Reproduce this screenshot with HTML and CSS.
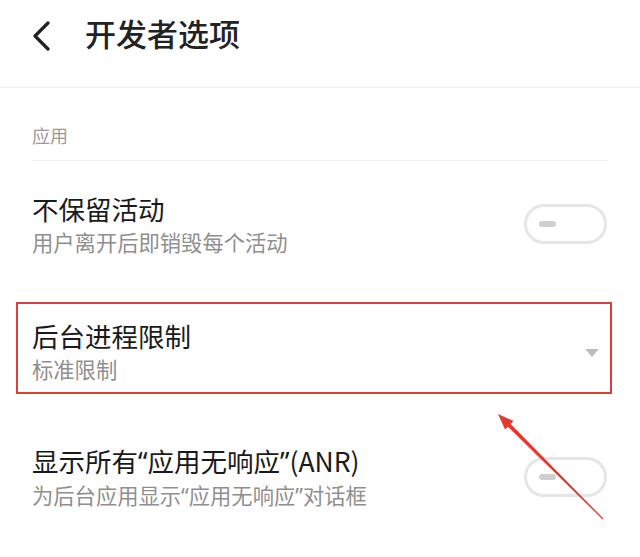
FILE: index.html
```html
<!DOCTYPE html>
<html lang="zh-CN">
<head>
<meta charset="utf-8">
<title>开发者选项</title>
<link rel="stylesheet" href="styles.css">
</head>
<body>
<div class="page">
  <header class="header">
    <svg class="back" width="22" height="30" viewBox="0 0 22 30"><path d="M18 2 L5 15 L18 28" fill="none" stroke="#222" stroke-width="3.2" stroke-linecap="round" stroke-linejoin="round"/></svg>
    <h1 class="title">开发者选项</h1>
  </header>
  <div class="section-label">应用</div>
  <div class="item item-first">
    <div class="texts">
      <div class="item-title">不保留活动</div>
      <div class="item-sub">用户离开后即销毁每个活动</div>
    </div>
    <div class="toggle"><span class="knob"></span></div>
  </div>
  <div class="item item-box">
    <div class="texts">
      <div class="item-title">后台进程限制</div>
      <div class="item-sub">标准限制</div>
    </div>
    <span class="caret"></span>
  </div>
  <div class="item item-last">
    <div class="texts">
      <div class="item-title">显示所有<span class="q">“</span>应用无响应<span class="q">”</span>(ANR)</div>
      <div class="item-sub">为后台应用显示<span class="q">“</span>应用无响应<span class="q">”</span>对话框</div>
    </div>
    <div class="toggle"><span class="knob"></span></div>
  </div>
  <svg class="arrow" width="640" height="557" viewBox="0 0 640 557">
    <polygon points="498,414 513.5,421.1 510.7,423.9 603.4,518.6 602.6,519.4 507.9,426.7 505.1,429.5" fill="#e6372c"/>
  </svg>
</div>
</body>
</html>
```
FILE: styles.css
```css
html, body {
  margin: 0;
  padding: 0;
  background: #fff;
}
body {
  font-family: "Noto Sans CJK SC", "Noto Sans", sans-serif;
  color: #1f1f1f;
  width: 640px;
  height: 557px;
  overflow: hidden;
}
.page {
  position: relative;
  width: 640px;
  height: 557px;
}
.header {
  display: flex;
  align-items: flex-start;
  height: 87px;
  border-bottom: 1px solid #eeeeee;
  box-sizing: content-box;
  padding-left: 30px;
}
.back {
  margin-top: 21px;
  display: block;
}
.title {
  margin: 17px 0 0 33px;
  font-size: 31px;
  line-height: 32px;
  font-weight: 500;
  color: #222;
}
.section-label {
  margin: 0 32px;
  padding-top: 37px;
  padding-bottom: 15px;
  font-size: 18px;
  line-height: 20px;
  color: #9a9a9a;
  border-bottom: 1px solid #f0f0f0;
}
.item {
  display: flex;
  align-items: center;
  justify-content: space-between;
}
.item-title {
  font-size: 26.5px;
  line-height: 26px;
  color: #1a1a1a;
}
.item-sub {
  margin-top: 9px;
  font-size: 21.3px;
  line-height: 21px;
  color: #8f8f8f;
}
.q {
  font-family: "Noto Sans", "Noto Sans CJK SC", sans-serif;
}
.item-first {
  padding: 35px 33px 0 32px;
}
.item-box {
  margin: 50px 28px 0 16px;
  border: 2px solid #d8403a;
  padding: 19px 11px 13px 14px;
}
.item-last {
  margin-top: 54px;
  padding: 0 33px 0 32px;
}
.toggle {
  box-sizing: border-box;
  width: 83px;
  height: 40px;
  border: 3px solid #e6e6e6;
  border-radius: 20px;
  display: flex;
  align-items: center;
  padding-left: 12px;
}
.knob {
  display: block;
  width: 17px;
  height: 6px;
  border-radius: 3px;
  background: #cfcfcf;
}
.caret {
  width: 0;
  height: 0;
  border-left: 7px solid transparent;
  border-right: 7px solid transparent;
  border-top: 8px solid #bdbdbd;
  margin-top: 4px;
}
.arrow {
  position: absolute;
  left: 0;
  top: 0;
  pointer-events: none;
}
```
